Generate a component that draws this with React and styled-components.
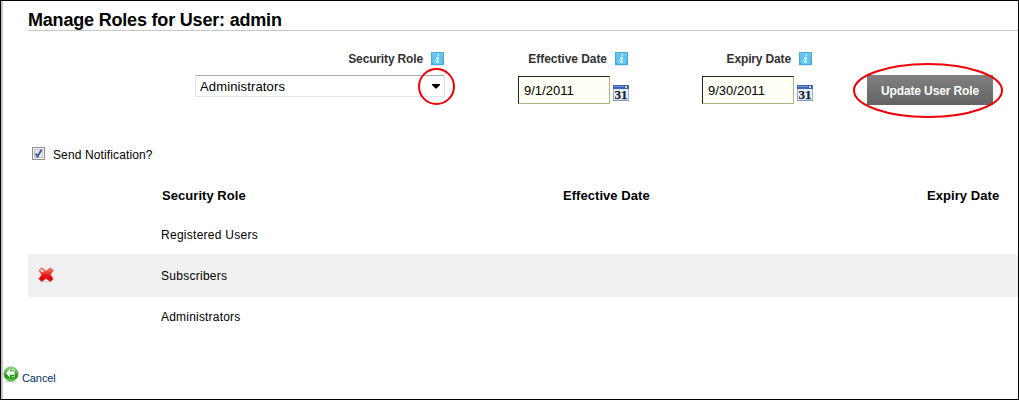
import React from "react";
import styled, { createGlobalStyle } from "styled-components";

const Global = createGlobalStyle`
  * { box-sizing: border-box; }
  body { margin: 0; background: #fff; }
  body, button, input { font-family: "Liberation Sans", Arial, sans-serif; }
`;

const Page = styled.main`
  width: 1019px;
  height: 400px;
  border: 1px solid #000;
  overflow: hidden;
  display: flex;
  background: #fff;
  color: #000;
`;
const Edge = styled.div`
  flex: none;
  width: 2px;
  background: #c9c5c5;
`;
const Content = styled.div`
  flex: 1;
  min-width: 0;
  display: flex;
  flex-direction: column;
`;
const Label = styled.span`
  font-size: ${(p) => p.$size || 12}px;
  font-weight: ${(p) => (p.$bold ? 700 : 400)};
  letter-spacing: ${(p) => p.$track || 0}px;
  color: ${(p) => p.$color || "#000"};
  white-space: nowrap;
`;
const Title = styled.h1`
  margin: 0 0 0 25px;
  height: 30px;
  padding-top: 9px;
  border-bottom: 1px solid #c6c6c6;
  font-size: 18px;
  line-height: 21px;
  letter-spacing: -0.19px;
  white-space: nowrap;
`;
const Form = styled.div`
  display: flex;
  align-items: flex-start;
  margin-top: 20px;
  height: 96px;
  padding-left: 192px;
`;
const Field = styled.div`
  width: ${(p) => p.$width}px;
  margin-right: ${(p) => p.$gap}px;
`;
const Caption = styled.div`
  display: flex;
  justify-content: flex-end;
  align-items: center;
  gap: 7px;
  height: 16px;
  margin-bottom: 8px;
  padding-right: ${(p) => p.$inset || 0}px;
`;
const Select = styled.div`
  position: relative;
  display: flex;
  justify-content: space-between;
  align-items: center;
  height: 22px;
  padding: 0 4px;
  border: 1px solid #dfe3ed;
  border-top-color: #a9abb1;
  border-radius: 1px;
`;
const Arrow = styled.svg`
  width: 8px;
  height: 5px;
`;
const Circle = styled.svg`
  position: absolute;
  overflow: visible;
  pointer-events: none;
  left: ${(p) => p.$left}px;
  top: ${(p) => p.$top}px;
`;
const DateLine = styled.div`
  display: flex;
  align-items: flex-end;
  justify-content: space-between;
  padding-top: 1px;
`;
const DateInput = styled.div`
  width: 92px;
  height: 28px;
  padding-left: 5px;
  line-height: 26px;
  background: #fffff5;
  border: 1px solid #24241c;
  border-right-color: #b5b08c;
  border-bottom-color: #b5b08c;
`;
const Calendar = styled.svg`
  width: 16px;
  height: 16px;
  margin-bottom: 3px;
`;
const ButtonWrap = styled.div`
  position: relative;
  margin-top: 24px;
`;
const Button = styled.button`
  display: block;
  width: 126px;
  height: 30px;
  padding: 0;
  border: 0;
  background: linear-gradient(#818181, #636363);
`;
const Notify = styled.label`
  display: flex;
  align-items: center;
  gap: 8px;
  height: 16px;
  padding-left: 29px;
  margin-bottom: 13px;
`;
const Check = styled.svg`
  width: 13px;
  height: 13px;
  margin-top: -3px;
`;
const Table = styled.section`
  margin-left: 25px;
`;
const Row = styled.div`
  display: grid;
  grid-template-columns: 133px ${(p) => (p.$head ? 401 : 402)}px 364px 1fr;
  align-items: center;
  height: ${(p) => p.$height}px;
  background: ${(p) => (p.$shaded ? "#f0f0f0" : "transparent")};
  padding-left: ${(p) => (p.$head ? 1 : 0)}px;
  padding-top: ${(p) => p.$drop || 0}px;
`;
const Delete = styled.svg`
  display: block;
  width: 16px;
  height: 16px;
  margin: -2px 0 0 10px;
`;
const Cancel = styled.a`
  display: flex;
  align-items: flex-start;
  gap: 3px;
  margin-top: 29px;
  ${Label} { margin-top: 6px; line-height: 13px; }
`;

const InfoIcon = () => (
  <svg width="14" height="15" viewBox="0 0 14 15">
    <defs>
      <linearGradient id="info" x1="0" y1="0" x2="0" y2="1">
        <stop stopColor="#75c9ef" /><stop offset="1" stopColor="#40b3e5" />
      </linearGradient>
    </defs>
    <path d="M1 13.5h12" stroke="#dce8ee" />
    <rect x="1.5" y=".5" width="12" height="12" fill="url(#info)" stroke="#45ade0" />
    <path d="M3 7h9v5H3z" fill="#7bd8f8" opacity=".6" />
    <path d="M7.7 3.2h1.4M6.3 5.7h1.8L6.8 9.8h1.7" stroke="#fff" strokeWidth="1.3" fill="none" />
  </svg>
);

const CalendarIcon = () => (
  <Calendar viewBox="0 0 16 16">
    <rect x=".5" y=".5" width="15" height="15" fill="#e6eefb" stroke="#98addb" />
    <path d="M0 0h16v4H0z" fill="#3e64b6" />
    <path d="M1 1h10v1H1z" fill="#7393d5" />
    <path d="M12 1h2v2h-2z" fill="#c8d8f4" />
    <path d="M0 15.5h16" stroke="#819bd0" />
    <text x="8" y="14" textAnchor="middle" fontFamily="Liberation Serif, serif" fontSize="13" fontWeight="700" fill="#20242e" stroke="#20242e" strokeWidth=".25">31</text>
  </Calendar>
);

const DateField = ({ caption, value, gap, track }) => (
  <Field $width={111} $gap={gap}>
    <Caption $inset={1}>
      <Label $bold $color="#333" $track={track}>{caption}</Label>
      <InfoIcon />
    </Caption>
    <DateLine>
      <DateInput><Label $size={13}>{value}</Label></DateInput>
      <CalendarIcon />
    </DateLine>
  </Field>
);

const Ring = ({ left, top, width, height }) => (
  <Circle $left={left} $top={top} width={width} height={height}>
    <ellipse cx={width / 2} cy={height / 2} rx={width / 2 - 1} ry={height / 2 - 1} fill="none" stroke="#f00008" strokeWidth="2" />
  </Circle>
);

const DeleteIcon = () => (
  <Delete viewBox="0 0 16 16">
    <defs>
      <linearGradient id="cross" x1="0" y1="0" x2="0" y2="1">
        <stop stopColor="#f4856f" /><stop offset=".5" stopColor="#ed1c1c" /><stop offset="1" stopColor="#ca0000" />
      </linearGradient>
    </defs>
    <ellipse cx="8" cy="14.8" rx="6" ry=".7" fill="#e0d8d8" />
    <path d="M1.2 3.2L3.6 1 8 4.2 12.4 1 15.2 3.4 12.3 7.6 15.2 11.8 12.4 14.5 8 11.5 3.6 14.5.9 11.8 3.8 7.8z" fill="url(#cross)" stroke="#e03c32" strokeWidth=".8" strokeLinejoin="round" />
    <path d="M2 3.2l1.5-1.3L6 4 4.5 5.8z" fill="#ffe2cc" />
  </Delete>
);

const BackIcon = () => (
  <svg width="16" height="17" viewBox="0 0 16 17">
    <defs>
      <linearGradient id="back" x1="0" y1="0" x2="0" y2="1">
        <stop stopColor="#a0d894" /><stop offset=".5" stopColor="#3ba332" /><stop offset=".65" stopColor="#158c15" /><stop offset="1" stopColor="#62cf4e" />
      </linearGradient>
    </defs>
    <ellipse cx="8" cy="15.5" rx="6" ry="1" fill="#ccd6cb" />
    <circle cx="8" cy="8" r="7.2" fill="url(#back)" stroke="#60ad57" strokeWidth=".6" />
    <path d="M2.8 7.2L7 3v2.6h4.7v3.2H7v2.6z" fill="#f2fff0" />
    <path d="M8.5 3.8h3v1.2M8.5 10.6h3V9.4" fill="none" stroke="#d5f1cf" strokeWidth=".8" />
  </svg>
);

const rows = [
  { role: "Registered Users", height: 40, drop: 2, track: 0.27 },
  { role: "Subscribers", height: 43, removable: true, track: 0.27 },
  { role: "Administrators", height: 40, track: 0.2 },
];

export default function App() {
  return (
    <>
      <Global />
      <Page>
        <Edge />
        <Content>
          <Title>Manage Roles for User: admin</Title>
          <Form>
            <Field $width={250} $gap={73}>
              <Caption $inset={1}>
                <Label $bold $color="#333" $track={-0.15}>Security Role</Label>
                <InfoIcon />
              </Caption>
              <Select>
                <Label $size={13} $track={0.14}>Administrators</Label>
                <Arrow viewBox="0 0 8 5"><path d="M0 0h8v1L4.5 4.5h-1L0 1z" /></Arrow>
                <Ring left={222} top={-8} width={37} height={37} />
              </Select>
            </Field>
            <DateField caption="Effective Date" value="9/1/2011" gap={73} track={-0.05} />
            <DateField caption="Expiry Date" value="9/30/2011" gap={54} track={-0.15} />
            <ButtonWrap>
              <Button><Label $bold $color="#fff" $track={-0.12}>Update User Role</Label></Button>
              <Ring left={-14} top={-12} width={150} height={55} />
            </ButtonWrap>
          </Form>
          <Notify>
            <Check viewBox="0 0 13 13">
              <rect x=".5" y=".5" width="12" height="12" fill="#f6f6f6" stroke="#8e8f8f" />
              <rect x="2.5" y="2.5" width="8" height="8" fill="#e3e6ea" stroke="#c1c6cd" />
              <path d="M3.5 6.5l2 3L9.5 2.8" fill="none" stroke="#405a9e" strokeWidth="1.9" />
            </Check>
            <Label $track={0.12}>Send Notification?</Label>
          </Notify>
          <Table>
            <Row $height={38} $head>
              <span />
              <Label $bold $size={13} $track={0.05}>Security Role</Label>
              <Label $bold $size={13} $track={0.05}>Effective Date</Label>
              <Label $bold $size={13} $track={0.07}>Expiry Date</Label>
            </Row>
            {rows.map((r) => (
              <Row key={r.role} $height={r.height} $drop={r.drop} $shaded={r.removable}>
                <span>{r.removable && <DeleteIcon />}</span>
                <Label $track={r.track}>{r.role}</Label>
              </Row>
            ))}
          </Table>
          <Cancel>
            <BackIcon />
            <Label $size={11} $color="#003366" $track={-0.1}>Cancel</Label>
          </Cancel>
        </Content>
      </Page>
    </>
  );
}
